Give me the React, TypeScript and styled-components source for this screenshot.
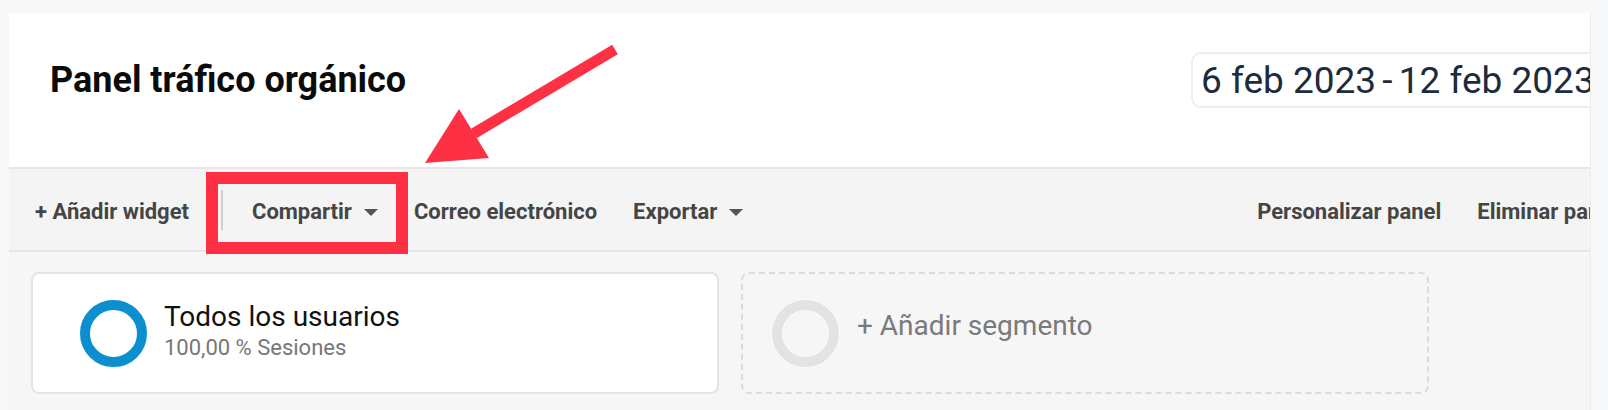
import React from "react";
import styled, { createGlobalStyle } from "styled-components";

const GlobalStyle = createGlobalStyle`
  html, body { margin: 0; padding: 0; }
  body {
    background: #f7f8fa;
    font-family: Roboto, "Liberation Sans", Arial, sans-serif;
    width: 1608px;
    height: 410px;
    overflow: hidden;
  }
  * { box-sizing: border-box; }
`;

const Page = styled.div`
  position: relative;
  width: 1608px;
  height: 410px;
  padding: 13px 17px 0 9px;
  overflow: hidden;
`;

const Card = styled.div`
  width: 1582px;
  height: 397px;
  overflow: hidden;
  display: flex;
  flex-direction: column;
  background: #f6f6f6;
  border-right: 1px solid #ececec;
`;

const Header = styled.header`
  height: 156px;
  flex: 0 0 auto;
  display: grid;
  grid-template-columns: 1141px auto;
  align-items: center;
  padding: 0 0 20px 41px;
  background: #ffffff;
  border-bottom: 2px solid #e6e6e6;
`;

const Title = styled.h1`
  margin: 0;
  font-size: 36px;
  line-height: 1;
  font-weight: 700;
  color: #0b0b0b;
  white-space: nowrap;
`;

const DateBox = styled.div`
  height: 56px;
  display: flex;
  align-items: center;
  padding: 0 8px;
  border: 2px solid #eceef0;
  border-radius: 10px;
`;

const DateText = styled.span`
  font-size: 37px;
  line-height: 1;
  color: #1c2c3c;
  white-space: nowrap;
`;

const Dash = styled.span`
  margin: 0 -3px;
`;

const Toolbar = styled.nav`
  height: 83px;
  flex: 0 0 auto;
  display: flex;
  align-items: center;
  gap: 36px;
  padding: 3px 0 0 26px;
  margin-right: -28px;
  background: #f4f4f4;
  border-bottom: 2px solid #e6e6e6;
`;

const ToolItem = styled.span<{ $push?: boolean }>`
  display: inline-flex;
  align-items: center;
  gap: 12px;
  flex: 0 0 auto;
  font-size: 22px;
  font-weight: 700;
  color: #454545;
  white-space: nowrap;
  margin-left: ${(p) => (p.$push ? "auto" : "0")};
`;

const Separator = styled.span`
  width: 2px;
  height: 40px;
  background: #cfcfcf;
  margin: -3px -7px 0 -4px;
  flex: 0 0 auto;
`;

const Caret = styled.span`
  width: 0;
  height: 0;
  border-left: 7px solid transparent;
  border-right: 7px solid transparent;
  border-top: 7px solid #555;
  margin-top: 2px;
`;

const Segments = styled.section`
  flex: 1;
  display: flex;
  gap: 22px;
  padding: 20px 0 0 22px;
  align-items: flex-start;
`;

const SegmentCard = styled.div<{ $dashed?: boolean }>`
  width: 688px;
  height: 122px;
  display: flex;
  align-items: center;
  gap: ${(p) => (p.$dashed ? "18px" : "17px")};
  padding-left: ${(p) => (p.$dashed ? "29px" : "47px")};
  border-radius: 8px;
  background: ${(p) => (p.$dashed ? "transparent" : "#ffffff")};
  border: 2px ${(p) => (p.$dashed ? "dashed #dcdcdc" : "solid #e4e4e4")};
`;

const Ring = styled.span<{ $color: string; $halo?: boolean }>`
  width: 67px;
  height: 67px;
  flex: 0 0 auto;
  border-radius: 50%;
  border: 10px solid ${(p) => p.$color};
  box-shadow: ${(p) => (p.$halo ? "0 0 0 1px #fbfbfb, inset 0 0 0 1px #fbfbfb" : "none")};
`;

const SegmentText = styled.div`
  display: flex;
  flex-direction: column;
  gap: 2px;
  margin-bottom: 4px;
`;

const SegmentName = styled.span<{ $muted?: boolean }>`
  font-size: 28px;
  line-height: 1.15;
  color: ${(p) => (p.$muted ? "#7a7a7a" : "#111111")};
  white-space: nowrap;
  margin-bottom: ${(p) => (p.$muted ? "14px" : "0")};
`;

const SegmentSub = styled.span`
  font-size: 22px;
  line-height: 1.15;
  color: #777777;
  white-space: nowrap;
`;

const Highlight = styled.div`
  position: absolute;
  left: 206px;
  top: 172px;
  width: 202px;
  height: 82px;
  border: 12px solid #fe3144;
  pointer-events: none;
`;

const ArrowSvg = styled.svg`
  position: absolute;
  left: 0;
  top: 0;
  pointer-events: none;
`;

export default function App() {
  return (
    <>
      <GlobalStyle />
      <Page>
        <Card>
          <Header>
            <Title>Panel tráfico orgánico</Title>
            <DateBox>
              <DateText>
                6 feb 2023 <Dash>-</Dash> 12 feb 2023
              </DateText>
            </DateBox>
          </Header>
          <Toolbar>
            <ToolItem>+ Añadir widget</ToolItem>
            <Separator />
            <ToolItem>
              Compartir <Caret />
            </ToolItem>
            <ToolItem>Correo electrónico</ToolItem>
            <ToolItem>
              Exportar <Caret />
            </ToolItem>
            <ToolItem $push>Personalizar panel</ToolItem>
            <ToolItem>Eliminar panel</ToolItem>
          </Toolbar>
          <Segments>
            <SegmentCard>
              <Ring $color="#0b8fcf" />
              <SegmentText>
                <SegmentName>Todos los usuarios</SegmentName>
                <SegmentSub>100,00 % Sesiones</SegmentSub>
              </SegmentText>
            </SegmentCard>
            <SegmentCard $dashed>
              <Ring $color="#e3e3e3" $halo />
              <SegmentName $muted>+ Añadir segmento</SegmentName>
            </SegmentCard>
          </Segments>
        </Card>
        <Highlight />
        <ArrowSvg width="1608" height="410" viewBox="0 0 1608 410">
          <polygon
            points="617.8,54.2 612.2,44.8 471,128.8 476.6,138.2"
            fill="#fe3144"
          />
          <polygon points="425,163 459,109 489,158" fill="#fe3144" />
        </ArrowSvg>
      </Page>
    </>
  );
}
